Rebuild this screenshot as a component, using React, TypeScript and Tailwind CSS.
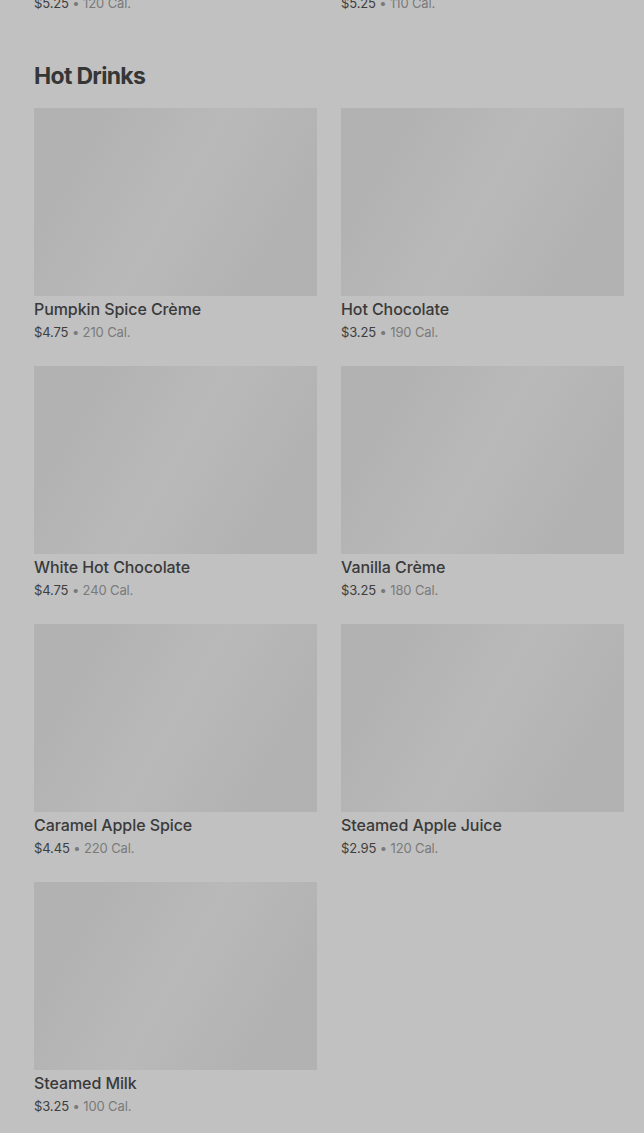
import React from 'react';

interface Drink {
  name: string;
  price: string;
  cal: string;
}

const drinks: Drink[] = [
  { name: 'Pumpkin Spice Crème', price: '$4.75', cal: '210 Cal.' },
  { name: 'Hot Chocolate', price: '$3.25', cal: '190 Cal.' },
  { name: 'White Hot Chocolate', price: '$4.75', cal: '240 Cal.' },
  { name: 'Vanilla Crème', price: '$3.25', cal: '180 Cal.' },
  { name: 'Caramel Apple Spice', price: '$4.45', cal: '220 Cal.' },
  { name: 'Steamed Apple Juice', price: '$2.95', cal: '120 Cal.' },
  { name: 'Steamed Milk', price: '$3.25', cal: '100 Cal.' },
];

const PriceLine: React.FC<{ price: string; cal: string }> = ({ price, cal }) => (
  <p className="text-[13px] leading-[20px] tracking-[-0.01em]">
    <span className="text-[#3e3e3e]">{price}</span>
    <span className="text-[#7a7a7a]"> • {cal}</span>
  </p>
);

const DrinkCard: React.FC<{ drink: Drink }> = ({ drink }) => (
  <div className="flex flex-col">
    <div className="h-[188px] w-full bg-[linear-gradient(120deg,#b2b2b2_18%,#b9b9b9_50%,#b2b2b2_82%)]" />
    <h3 className="text-[16px] leading-[26px] font-medium text-[#3a3a3a] tracking-[-0.005em]">{drink.name}</h3>
    <PriceLine price={drink.price} cal={drink.cal} />
  </div>
);

export default function App() {
  return (
    <div className="min-h-[1133px] bg-[#c1c1c1] pl-[34px] pr-[20px] font-['Inter',sans-serif] overflow-hidden">
      {/* tail of the previous section */}
      <div className="grid grid-cols-2 gap-x-[24px] -mt-[7px]">
        <PriceLine price="$5.25" cal="120 Cal." />
        <PriceLine price="$5.25" cal="110 Cal." />
      </div>

      <section className="pt-[47px]">
        <h2 className="text-[23px] leading-[32px] font-bold text-[#363636] tracking-[-0.03em]">Hot Drinks</h2>
        <div className="mt-[16px] grid grid-cols-2 gap-x-[24px] gap-y-[24px]">
          {drinks.map((d) => (
            <DrinkCard key={d.name} drink={d} />
          ))}
        </div>
      </section>
    </div>
  );
}
